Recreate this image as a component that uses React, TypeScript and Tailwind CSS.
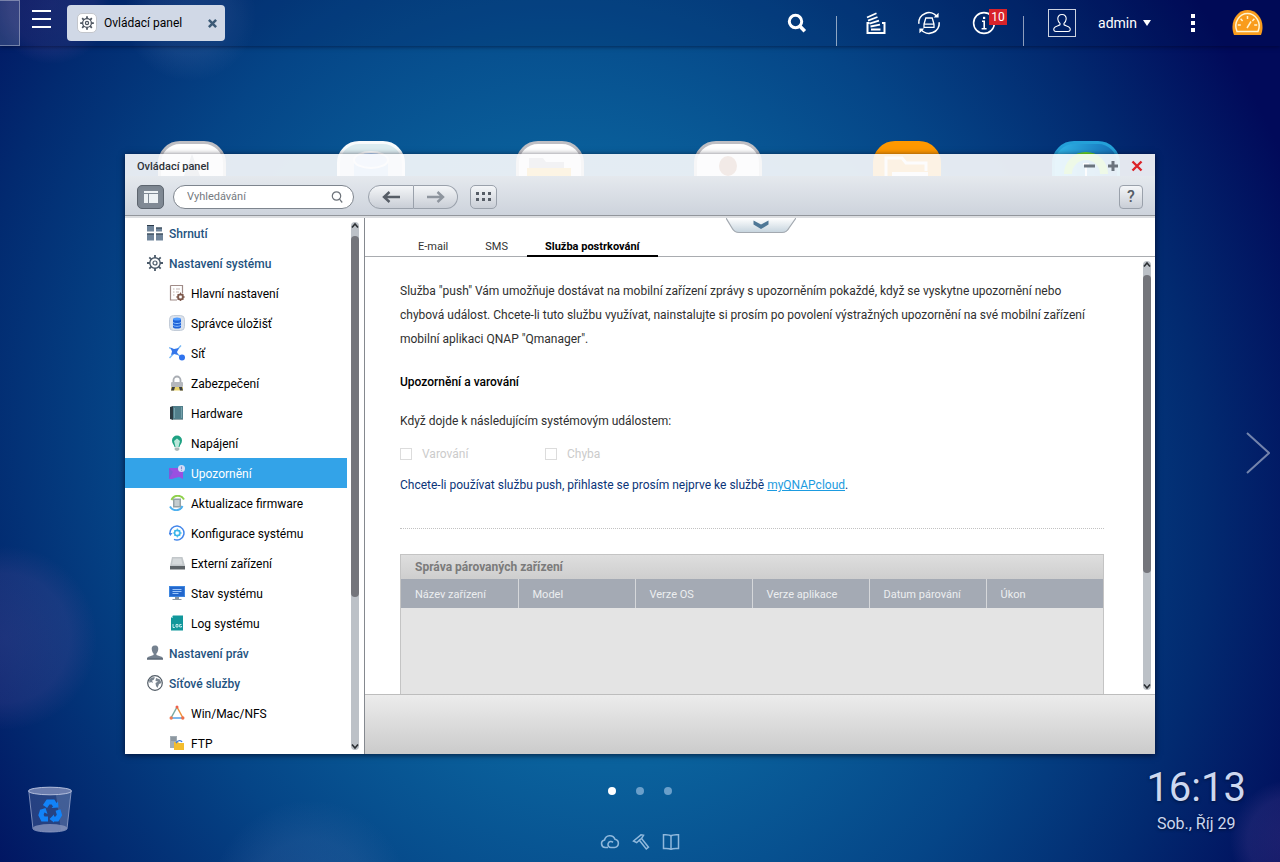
import React from "react";

type IconProps = { className?: string };

/* ---------- top bar icons ---------- */

const SearchIcon = ({ className }: IconProps) => (
  <svg viewBox="0 0 20 20" className={className} fill="none" stroke="currentColor">
    <circle cx="8.5" cy="8.5" r="6.2" strokeWidth="3" />
    <path d="M13 13.2 17.8 18.2" strokeWidth="3.6" />
  </svg>
);

const StackIcon = ({ className }: IconProps) => (
  <svg viewBox="0 0 20 22" className={className} fill="none" stroke="currentColor" strokeWidth="2">
    <path d="M3.5 11H1.5v10h17V11h-2.500" />
    <path d="M1 5.500 10.500 1.200M2 8.600 11.500 5M3.500 11.600 13 8.700M4.500 14.500 14 12.600M5 17.500h9.500" strokeWidth="1.800" />
  </svg>
);

const SyncIcon = ({ className }: IconProps) => (
  <svg viewBox="0 0 24 24" className={className} fill="none" stroke="currentColor" strokeWidth="1.600">
    <path d="M1.800 12.800A10.200 10.200 0 0 1 20 5.600M22.200 11.200A10.200 10.200 0 0 1 4 18.400" />
    <path d="M16.600 6.400h5V1.800zM7.400 17.600h-5v4.600z" fill="currentColor" stroke="none" />
    <path d="M8.800 7h6.400l1.800 6.200v3.200H7v-3.200zM7 13.200h10" strokeWidth="1.300" />
  </svg>
);

const InfoIcon = ({ className }: IconProps) => (
  <svg viewBox="0 0 24 24" className={className} fill="none" stroke="currentColor">
    <circle cx="12" cy="12" r="10.400" strokeWidth="1.600" />
    <path d="M10 10.200h2.200v7.400M9.600 17.800h5" strokeWidth="1.600" />
    <rect x="11" y="5.800" width="2.200" height="2.200" fill="currentColor" stroke="none" />
  </svg>
);

const UserIcon = ({ className }: IconProps) => (
  <svg viewBox="0 0 20 20" className={className} fill="none" stroke="currentColor" strokeWidth="1.100">
    <path d="M10 1.500c-3 0-4.300 2-4.200 4.400.1 2 1 3.300 2.200 4.400v1.500c-1.300 1-5 1.200-6 3.400-.8 2 .4 3.300 2 3.300h12c1.600 0 2.800-1.300 2-3.300-1-2.200-4.700-2.400-6-3.400v-1.500c1.200-1.100 2.100-2.400 2.200-4.400C14.300 3.500 13 1.500 10 1.500z" />
  </svg>
);

const GaugeIcon = ({ className }: IconProps) => (
  <svg viewBox="0 0 31 26" className={className}>
    <path d="M2 25C-3 12 5 0 15.500 0S34 12 29 25z" fill="#f99c1c" />
    <path d="M5 21.500C1 12 8 3.500 15.500 3.500S30 12 26 21.500z" fill="none" stroke="#fff3d0" strokeWidth="1.500" />
    <path d="M15.500 6v3M8.600 8.700l2 2.200M22.400 8.700l-2 2.200M5.800 15h3M25.200 15h-3M15 18l4-6.500" stroke="#fff3d0" strokeWidth="1.500" />
  </svg>
);

const Cog = ({ className }: IconProps) => (
  <svg viewBox="0 0 16 16" className={className} fill="none" stroke="currentColor">
    <circle cx="8" cy="8" r="5" strokeWidth="1.500" />
    <circle cx="8" cy="8" r="1.800" strokeWidth="1.400" />
    <path
      d="M8 .2v2.600M8 13.200v2.600M.2 8h2.600M13.200 8h2.600M2.500 2.500l1.800 1.800M11.700 11.700l1.800 1.800M2.500 13.500l1.800-1.800M11.700 4.300l1.800-1.800"
      strokeWidth="2"
    />
  </svg>
);

/* ---------- sidebar icons ---------- */

const icons: Record<string, React.ReactNode> = {
  overview: (
    <>
      <path d="M0 0h7v6.500H0zM9 2.500h6v4H9zM0 8.500h7v7H0zM9 8.500h7v7H9z" fill="#70859b" />
      <path d="M0 0h7v1H0zM9 2.500h6v1H9zM0 8.500h7v1H0zM9 8.500h7v1H9z" fill="#2b3a49" />
    </>
  ),
  cog: (
    <g fill="none" stroke="#4b5a69">
      <circle cx="8" cy="8" r="5.200" strokeWidth="1.400" />
      <circle cx="8" cy="8" r="2" strokeWidth="1.200" />
      <path d="M8 0v3M8 13v3M0 8h3M13 8h3M2.300 2.300l2 2M11.700 11.700l2 2M2.300 13.700l2-2M11.700 4.300l2-2" strokeWidth="1.800" />
    </g>
  ),
  general: (
    <>
      <path d="M1.500.5h12v8M1.500.5v14.500H8" fill="none" stroke="#a08c88" strokeWidth="1.200" />
      <path d="M4 4h1.500M7 4h4M4 7h1.500M7 7h3M4 10h1.500" stroke="#c3b5b0" />
      <circle cx="11.500" cy="12" r="2.600" fill="none" stroke="#7a5548" strokeWidth="1.600" />
      <path d="M11.500 7.500v9M7 12h9M8.500 9l6 6M8.500 15l6-6" stroke="#7a5548" strokeWidth=".9" />
      <circle cx="11.500" cy="12" r="1.400" fill="#fff" />
    </>
  ),
  storage: (
    <>
      <rect x=".5" y=".5" width="15" height="15" rx="4" fill="#dbe2ec" stroke="#c3ccd8" />
      <path d="M4 4v8c0 2 8 2 8 0V4z" fill="#1f62d8" />
      <ellipse cx="8" cy="4" rx="4" ry="1.600" fill="#4e9bff" />
      <path d="M4 7c0 2 8 2 8 0M4 9.800c0 2 8 2 8 0" fill="none" stroke="#8fc1ff" />
    </>
  ),
  network: (
    <>
      <path d="M5 6 13 13M.5 13 12 .5M0 2.500 6 6" stroke="#76b7f5" strokeWidth="1.400" />
      <path d="M1.500 2.500 5 4l5-1-2 4 1 3-4-1-3 1 1-3.500z" fill="#3476ea" />
      <circle cx="13" cy="12.500" r="3" fill="#2f73ee" />
    </>
  ),
  lock: (
    <>
      <path d="M4.500 8V5a3.500 3.500 0 0 1 7 0v3" fill="none" stroke="#a9adb3" strokeWidth="1.800" />
      <rect x="2" y="7" width="12" height="5" rx="1" fill="#b4b7bc" />
      <path d="M2 12h12v3.500H2z" fill="#ead46a" />
      <path d="M3 12h3l-1 3.500H2zM10 12h3l1 3.500h-3z" fill="#3c3f42" />
    </>
  ),
  hardware: (
    <>
      <path d="M1 2 4 1v14l-3-1z" fill="#2d3b43" />
      <rect x="4" y="1" width="10" height="13" fill="#517f8b" />
      <path d="M5 3h1v10H5zM12 2h1v11h-1z" fill="#76a2ac" />
      <path d="M4 14h10v1H4z" fill="#93a5aa" />
    </>
  ),
  power: (
    <>
      <path d="M8 .5a5 5 0 0 1 5 5c0 3-2 4-2.500 6.500h-5C5 9.500 3 8.500 3 5.500a5 5 0 0 1 5-5z" fill="#1fa283" />
      <path d="M8 3.500 11 6l-1.500 6h-3L5 6z" fill="#b9e8da" />
      <path d="M5.700 12.500h4.600V15l-2.300 1-2.300-1z" fill="#a9b6b4" />
    </>
  ),
  notify: (
    <>
      <path d="M0 3h14v11l-4-2-4 1-3 1H0z" fill="#9a4fe0" />
      <path d="M0 3l4 4-4 7z" fill="#7c5ad8" />
      <circle cx="12.500" cy="3.500" r="3.500" fill="#d4dcf6" />
      <path d="M12.500 1.500v2.500M12.500 4.800v1" stroke="#7f8fd2" strokeWidth="1.100" />
    </>
  ),
  firmware: (
    <>
      <path d="M2.500 5C5-.5 12-.5 15 4.500" fill="none" stroke="#8ed04a" strokeWidth="2" />
      <path d="M13.500 11C11 16.500 4 16.500 1 11.500" fill="none" stroke="#4db0ef" strokeWidth="2" />
      <rect x="4" y="3.500" width="8" height="9" fill="#94a1a6" />
      <rect x="5.500" y="5" width="5" height="6" fill="#c4cdd0" />
    </>
  ),
  config: (
    <>
      <path d="M1 9A7 7 0 1 1 5 14.400" fill="none" stroke="#4386ea" strokeWidth="1.500" />
      <path d="M-.5 8h4L1.300 11z" fill="#4386ea" />
      <g fill="none" stroke="#35b3ea">
        <circle cx="8.300" cy="8" r="2.800" strokeWidth="1.300" />
        <path d="M8.300 3.500v9M3.800 8h9M5.200 4.900l6.200 6.200M5.200 11.100l6.200-6.200" strokeWidth=".9" />
      </g>
      <circle cx="8.300" cy="8" r="1.600" fill="#fff" />
    </>
  ),
  external: (
    <>
      <path d="M3 2h10.500L16 11H1z" fill="#c2c7ca" />
      <path d="M4.200 3.500h8l1.300 6H3z" fill="#d6dadc" />
      <path d="M1 11h15v3.500H1z" fill="#5c6266" />
    </>
  ),
  status: (
    <>
      <rect x="0" y="1" width="16" height="11" fill="#3d86e0" />
      <rect x="1" y="2" width="14" height="9" fill="#2367cc" />
      <path d="M3.500 4.500h9M3.500 6.500h9M3.500 8.500h6" stroke="#9bc6fb" />
      <path d="M6 12h4v2h2.500v1h-9v-1H6z" fill="#8b95a0" />
    </>
  ),
  log: (
    <>
      <path d="M4 .5h10v15H2V3z" fill="#11979b" />
      <path d="M4 .5V3H2z" fill="#7fd0d2" />
      <path d="M4 9v3.500h1.800M7 9.500h2v2.500H7zM12.500 9.500h-1.800v2.500h1.800v-1" stroke="#d7f3f3" fill="none" strokeWidth=".9" />
    </>
  ),
  user: (
    <>
      <path d="M8 .5c-2.800 0-3.600 2-3.200 4.200.3 2 1 3 1.800 3.800v1.500L.8 12c-.8.800-.8 2-.8 2.500h16c0-.500 0-1.700-.8-2.500L9.400 10V8.500c.800-.800 1.500-1.800 1.800-3.800C11.600 2.500 10.800.500 8 .5z" fill="#75818f" />
      <path d="M0 13.500h16v1H0z" fill="#4f5b68" />
    </>
  ),
  globe: (
    <>
      <circle cx="8" cy="8" r="7.300" fill="#fff" stroke="#525c66" strokeWidth="1.200" />
      <path d="M2 5c2-3 4-3 6-2.500L6.500 5 5 5.500 6 8 4 7 2.500 8zM9 3l4 1.500L14.500 8 12 9l-1.500 4L9 11l-.500-3L11 6.500 8.500 6z" fill="#7a8590" />
    </>
  ),
  triangle: (
    <>
      <path d="M8 2 14 13" stroke="#f0913c" strokeWidth="1.500" />
      <path d="M8 2 2 13" stroke="#79a9a0" strokeWidth="1.500" />
      <path d="M2 13h12" stroke="#52a1e6" strokeWidth="1.500" />
      <circle cx="8" cy="2" r="1.500" fill="#ee5f4b" />
      <circle cx="2.200" cy="13" r="1.700" fill="#ef7b52" />
      <circle cx="13.800" cy="13" r="1.700" fill="#ee6f4a" />
    </>
  ),
  ftp: (
    <>
      <path d="M1 1h7v12H1z" fill="#a3adb5" />
      <path d="M2 3h5M2 5h5" stroke="#77828b" />
      <path d="M5 7h4l1 1h5v7H5z" fill="#f3bd2f" />
      <path d="M7 8c2-3 5-3 6-1" fill="none" stroke="#3a7be0" strokeWidth="1.400" />
    </>
  ),
};

type Row = { icon: string; label: string; group?: boolean; active?: boolean };

const rows: Row[] = [
  { icon: "overview", label: "Shrnutí", group: true },
  { icon: "cog", label: "Nastavení systému", group: true },
  { icon: "general", label: "Hlavní nastavení" },
  { icon: "storage", label: "Správce úložišť" },
  { icon: "network", label: "Síť" },
  { icon: "lock", label: "Zabezpečení" },
  { icon: "hardware", label: "Hardware" },
  { icon: "power", label: "Napájení" },
  { icon: "notify", label: "Upozornění", active: true },
  { icon: "firmware", label: "Aktualizace firmware" },
  { icon: "config", label: "Konfigurace systému" },
  { icon: "external", label: "Externí zařízení" },
  { icon: "status", label: "Stav systému" },
  { icon: "log", label: "Log systému" },
  { icon: "user", label: "Nastavení práv", group: true },
  { icon: "globe", label: "Síťové služby", group: true },
  { icon: "triangle", label: "Win/Mac/NFS" },
  { icon: "ftp", label: "FTP" },
];

const rowClass = (row: Row) => {
  if (row.active) return "bg-[#33a3e8] pl-11 text-white";
  if (row.group) return "pl-[22px] font-medium text-[#1f5380]";
  return "pl-11 text-black";
};

function ScrollBar({ thumb }: { thumb: string }) {
  return (
    <div className="flex w-2 shrink-0 flex-col rounded-full bg-[#bcc1c7]">
      <svg viewBox="0 0 8 14" className="h-[14px] w-2 shrink-0" fill="none" stroke="#2b2f33" strokeWidth="1.600">
        <path d="M1 5.500 4 2 7 5.500" />
      </svg>
      <div className="min-h-0 flex-1">
        <div className={`w-2 rounded-full bg-[#74757b] ${thumb}`} />
      </div>
      <svg viewBox="0 0 8 12" className="h-3 w-2 shrink-0" fill="none" stroke="#2b2f33" strokeWidth="1.600">
        <path d="M1 6.500 4 10 7 6.500" />
      </svg>
    </div>
  );
}

/* ---------- desktop ---------- */

function Backdrop() {
  return (
    <svg className="absolute inset-0 h-full w-full" viewBox="0 0 1280 862" preserveAspectRatio="none" aria-hidden="true">
      <defs>
        <radialGradient id="glow" gradientUnits="userSpaceOnUse" cx="0" cy="0" r="1" gradientTransform="translate(590 470) rotate(-20) scale(760 860)">
          <stop offset="0" stopColor="#0c6fa9" />
          <stop offset=".35" stopColor="#0a619c" />
          <stop offset=".6" stopColor="#054587" />
          <stop offset=".8" stopColor="#022a70" />
          <stop offset="1" stopColor="#010a5a" />
        </radialGradient>
        <radialGradient id="bokeh">
          <stop offset="0" stopColor="#6a50a0" stopOpacity=".26" />
          <stop offset=".7" stopColor="#6a50a0" stopOpacity=".2" />
          <stop offset="1" stopColor="#6a50a0" stopOpacity="0" />
        </radialGradient>
        <radialGradient id="bokehBlue">
          <stop offset="0" stopColor="#6080c0" stopOpacity=".22" />
          <stop offset=".6" stopColor="#6080b8" stopOpacity=".16" />
          <stop offset="1" stopColor="#6080b8" stopOpacity="0" />
        </radialGradient>
      </defs>
      <rect width="1280" height="862" fill="url(#glow)" />
      <circle cx="5" cy="638" r="92" fill="url(#bokeh)" />
      <circle cx="310" cy="900" r="100" fill="url(#bokehBlue)" />
      <circle cx="52" cy="4" r="60" fill="url(#bokeh)" />
      <circle cx="190" cy="15" r="66" fill="url(#bokehBlue)" />
      <circle cx="1290" cy="840" r="60" fill="url(#bokeh)" />
    </svg>
  );
}

const appTiles: { label: string; box: string; art: React.ReactNode }[] = [
  { label: "Aplikace 1", box: "border-[#bfbfc4] bg-white", art: <path d="M31 10 42 40H20z" fill="#8a94a0" /> },
  {
    label: "Aplikace 2",
    box: "border-[#f8fbfc] bg-[#dcecf0]",
    art: (
      <>
        <path d="M14 16v24h34V16z" fill="#8fbcf0" />
        <ellipse cx="31" cy="16" rx="17" ry="8" fill="#b4d4fa" stroke="#fff" strokeWidth="2" />
      </>
    ),
  },
  {
    label: "Aplikace 3",
    box: "border-[#bfbfc4] bg-white",
    art: (
      <>
        <path d="M10 14h14l3 4h18v20H10z" fill="#9a9da2" />
        <path d="M8 24h44v20H8z" fill="#ffb000" />
      </>
    ),
  },
  {
    label: "Aplikace 4",
    box: "border-[#bfbfc4] bg-white",
    art: <ellipse cx="31" cy="22" rx="9" ry="10" fill="#9c4a20" />,
  },
  {
    label: "Aplikace 5",
    box: "border-[#ff9800] bg-[#ff9800]",
    art: (
      <>
        <path d="M10 38V14h16l4 5h20v8" fill="none" stroke="#fff" strokeWidth="3" />
        <path d="M16 28h36v14H16z" fill="#fff" />
      </>
    ),
  },
  {
    label: "Aplikace 6",
    box: "border-[#24a0d8] bg-linear-to-r from-[#32b7e8] to-[#1670b8]",
    art: (
      <>
        <path d="M13 30a18 18 0 0 1 36 0" fill="none" stroke="#6fe01f" strokeWidth="8" />
        <path d="M31 20v16M28 20h6" stroke="#fff" strokeWidth="2" />
      </>
    ),
  },
];

function TopBar() {
  return (
    <header className="relative z-10 flex h-[46px] shrink-0 items-center bg-[#001040]/15 pr-[17px] text-white shadow-[0_1px_4px_rgba(0,0,30,0.5)]">
      <div className="h-full w-5 border border-l-0 border-white/35 bg-white/15" />
      <button aria-label="Hlavní nabídka" className="mb-2 ml-3 flex w-[19px] flex-col gap-[6px]">
        <span className="h-[2px] bg-white" />
        <span className="h-[2px] bg-white" />
        <span className="h-[2px] bg-white" />
      </button>
      <div className="ml-4 flex h-9 w-[158px] items-center rounded bg-[#d0d8e6] pr-2 pl-[10px] text-black">
        <span className="flex size-5 items-center justify-center rounded-[5px] border border-[#c3c6cc] bg-white text-[#4d5560]">
          <Cog className="size-[14px]" />
        </span>
        <span className="ml-[7px] flex-1 text-xs">Ovládací panel</span>
        <button aria-label="Zavřít kartu" className="text-[#3c5a76]">
          <svg viewBox="0 0 10 10" className="size-[9px]" stroke="currentColor" strokeWidth="2.800">
            <path d="M1 1l8 8M9 1 1 9" />
          </svg>
        </button>
      </div>

      <div className="ml-auto flex h-full items-center">
        <button aria-label="Hledat" className="mr-[29px]">
          <SearchIcon className="size-5" />
        </button>
        <span className="mr-[29px] h-[30px] w-px self-end bg-white/55" />
        <button aria-label="Úlohy na pozadí" className="mr-[31px]">
          <StackIcon className="h-[22px] w-5" />
        </button>
        <button aria-label="Externí zařízení" className="mr-[31px]">
          <SyncIcon className="size-6" />
        </button>
        <button aria-label="Oznámení" className="relative mr-[27px]">
          <InfoIcon className="size-6" />
          <span className="absolute -top-[2px] left-[17px] flex h-4 w-[18px] items-center justify-center bg-[#d8232a] text-xs leading-none">
            10
          </span>
        </button>
        <span className="mr-6 h-[30px] w-px self-end bg-white/55" />
        <button className="mr-10 flex items-center">
          <span className="mr-[22px] flex size-7 items-center justify-center border border-white/80">
            <UserIcon className="size-5" />
          </span>
          <span className="text-sm">admin</span>
          <svg viewBox="0 0 8 6" className="ml-[6px] h-[6px] w-2" fill="currentColor">
            <path d="M0 0h8L4 6z" />
          </svg>
        </button>
        <button aria-label="Více" className="mr-[37px] flex flex-col gap-[3px]">
          <span className="size-1 bg-white" />
          <span className="size-1 bg-white" />
          <span className="size-1 bg-white" />
        </button>
        <button aria-label="Řídicí panel">
          <GaugeIcon className="h-[26px] w-[31px]" />
        </button>
      </div>
    </header>
  );
}

const toolButton = "flex h-6 items-center justify-center border border-[#9aa1ab] bg-linear-to-b from-[#f4f6f8] to-[#c9ced6] text-[#565d66]";

function ControlPanel() {
  return (
    <section
      aria-label="Ovládací panel"
      className="absolute inset-x-[125px] inset-y-[108px] flex flex-col text-xs shadow-[0_1px_6px_rgba(0,0,20,0.7)]"
    >
      <div className="flex h-[22px] shrink-0 items-center bg-[#fcfcfd]/90 px-3 text-[#2d3339]">
        <h1 className="flex-1 pt-1 text-[11px] font-medium">Ovládací panel</h1>
        <div className="flex items-center gap-3 pt-[2px] text-[#6b747e]">
          <button aria-label="Minimalizovat">
            <svg viewBox="0 0 12 12" className="size-3" stroke="currentColor" strokeWidth="3">
              <path d="M1 6h11" />
            </svg>
          </button>
          <button aria-label="Maximalizovat">
            <svg viewBox="0 0 12 12" className="size-3" stroke="currentColor" strokeWidth="3">
              <path d="M1 6h10M6 1v10" />
            </svg>
          </button>
          <button aria-label="Zavřít" className="text-[#dc2228]">
            <svg viewBox="0 0 12 12" className="size-3" stroke="currentColor" strokeWidth="2.400">
              <path d="M1.500 1.500l9 9M10.500 1.500l-9 9" />
            </svg>
          </button>
        </div>
      </div>

      <div className="flex h-10 shrink-0 items-center border-b border-[#92969c] bg-linear-to-b from-[#e5e9ee] to-[#cdd3dc] px-3 pt-[2px]">
        <button aria-label="Postranní panel" className="flex h-6 w-[27px] items-center justify-center rounded-[5px] border border-[#5d656f] bg-[#818a95] shadow-inner">
          <svg viewBox="0 0 14 12" className="h-3 w-[14px]" fill="#eef2f5">
            <path d="M0 0h14v2H0zM0 3h4v9H0zM5 3h9v9H5z" />
          </svg>
        </button>
        <label className="ml-[9px] flex h-6 w-[181px] items-center rounded-full border border-[#7e858e] bg-white px-[13px]">
          <input aria-label="Vyhledávání" placeholder="Vyhledávání" className="min-w-0 flex-1 bg-transparent pt-[2px] text-[11px] outline-none placeholder:text-[#757a80]" />
          <svg viewBox="0 0 12 12" className="-mr-[3px] size-3" fill="none" stroke="#6d737a" strokeWidth="1.200">
            <circle cx="5.500" cy="5" r="4.200" />
            <path d="M8.500 8.200 11.200 11.500" />
          </svg>
        </label>
        <div className="ml-[14px] flex">
          <button aria-label="Zpět" className={`${toolButton} w-[46px] rounded-l-full`}>
            <svg viewBox="0 0 18 12" className="h-3 w-[18px]" fill="none" stroke="currentColor" strokeWidth="2.400">
              <path d="M18 6H2M7.500 1 2 6l5.500 5" />
            </svg>
          </button>
          <button aria-label="Vpřed" className={`${toolButton} w-11 rounded-r-full border-l-0`}>
            <svg viewBox="0 0 18 12" className="h-3 w-[18px]" fill="none" stroke="#8e959e" strokeWidth="2.400">
              <path d="M0 6h16M10.500 1 16 6l-5.500 5" />
            </svg>
          </button>
        </div>
        <button aria-label="Zobrazit jako ikony" className={`${toolButton} ml-3 w-[27px] rounded-[5px]`}>
          <svg viewBox="0 0 15 10" className="h-[10px] w-[15px]" fill="currentColor">
            <path d="M0 0h3v3H0zM6 0h3v3H6zM12 0h3v3h-3zM0 6h3v3H0zM6 6h3v3H6zM12 6h3v3h-3z" />
          </svg>
        </button>
        <button aria-label="Nápověda" className={`${toolButton} ml-auto w-6 rounded text-base font-medium`}>
          ?
        </button>
      </div>
      <div className="h-[2px] shrink-0 bg-[#dcdee1]" />

      <div className="flex min-h-0 flex-1 bg-white">
        <nav className="flex w-[240px] shrink-0 border-r border-[#85898f]">
          <ul className="min-w-0 flex-1 overflow-hidden">
            {rows.map((row) => (
              <li key={row.label}>
                <a href="#" className={`flex h-[30px] items-center gap-[6px] ${rowClass(row)}`}>
                  <svg viewBox="0 0 16 16" className="size-4 shrink-0">
                    {icons[row.icon]}
                  </svg>
                  <span className="pt-px">{row.label}</span>
                </a>
              </li>
            ))}
          </ul>
          <div className="flex py-1 pr-[5px] pl-1">
            <ScrollBar thumb="h-[72%]" />
          </div>
        </nav>

        <div className="relative flex min-w-0 flex-1 flex-col">
          <button aria-label="Rozbalit" className="absolute top-0 left-1/2 -ml-[34px]">
            <svg viewBox="0 0 70 16" className="h-4 w-[70px]">
              <defs>
                <linearGradient id="pull" x2="0" y2="1">
                  <stop offset="0" stopColor="#fff" />
                  <stop offset="1" stopColor="#c6d4de" />
                </linearGradient>
              </defs>
              <path d="M0 0 6 10c2 4 4 4.500 7 4.500h43c3 0 5-.5 7-4.500l7-10" fill="url(#pull)" stroke="#a3a9b0" strokeWidth="1.200" />
              <path d="M27.500 2.500 35 6.500l7.500-4v4L35 11l-7.500-4.500z" fill="#4e7796" />
            </svg>
          </button>

          <div role="tablist" className="flex h-[39px] shrink-0 items-end gap-px border-b border-[#a9acb0] pl-[35px] text-[11px] text-[#333]">
            <button role="tab" className="h-[26px] px-[18px] pt-[9px]">E-mail</button>
            <button role="tab" className="h-[26px] px-[18px] pt-[9px]">SMS</button>
            <button role="tab" aria-selected="true" className="-mb-px h-[27px] border-b-2 border-black px-[18px] pt-[9px] font-bold text-black">
              Služba postrkování
            </button>
          </div>

          <div className="flex min-h-0 flex-1 overflow-hidden">
            <div className="min-w-0 flex-1 overflow-hidden pt-[22px] pr-[39px] pl-[35px] text-[#2f2f2f]">
              <p className="leading-6">
                Služba "push" Vám umožňuje dostávat na mobilní zařízení zprávy s upozorněním pokaždé, když se vyskytne upozornění nebo
                chybová událost. Chcete-li tuto službu využívat, nainstalujte si prosím po povolení výstražných upozornění na své mobilní zařízení
                mobilní aplikaci QNAP "Qmanager".
              </p>
              <h2 className="mt-[19px] leading-6 font-medium text-black">Upozornění a varování</h2>
              <p className="mt-[15px] leading-6">Když dojde k následujícím systémovým událostem:</p>
              <div className="mt-[9px] flex h-6 items-center text-[#cbcbcb]">
                <label className="flex w-[145px] items-center gap-[10px]">
                  <input type="checkbox" disabled className="size-3 appearance-none border border-[#dcdcdc] bg-white" />
                  Varování
                </label>
                <label className="flex items-center gap-[10px]">
                  <input type="checkbox" disabled className="size-3 appearance-none border border-[#dcdcdc] bg-white" />
                  Chyba
                </label>
              </div>
              <p className="mt-[7px] leading-6 text-[#0a3478]">
                Chcete-li používat službu push, přihlaste se prosím nejprve ke službě{" "}
                <a href="#" className="text-[#1b9be0] underline">myQNAPcloud</a>.
              </p>
              <hr className="mt-[31px] border-t border-dotted border-[#c2c2c2]" />

              <div className="mt-[25px] border border-[#c4c4c4] bg-[#e4e4e4] text-[11px]">
                <h3 className="flex h-6 items-center bg-linear-to-b from-[#dedede] to-[#cecece] px-[14px] text-xs font-bold text-[#7b7b7b]">
                  Správa párovaných zařízení
                </h3>
                <table className="w-full table-fixed text-left">
                  <thead>
                    <tr className="h-[29px] bg-[#a4aab4] text-[#eceef0]">
                      {["Název zařízení", "Model", "Verze OS", "Verze aplikace", "Datum párování", "Úkon"].map((name) => (
                        <th key={name} className="border-r border-[#d5d7da] pt-1 pl-[14px] font-normal last:border-r-0">
                          {name}
                        </th>
                      ))}
                    </tr>
                  </thead>
                  <tbody>
                    <tr className="h-[150px]">
                      <td colSpan={6} />
                    </tr>
                  </tbody>
                </table>
              </div>
            </div>
            <div className="flex py-1 pr-1">
              <ScrollBar thumb="h-[74%]" />
            </div>
          </div>

          <footer className="h-[60px] shrink-0 border-t border-[#bdbdbd] bg-linear-to-b from-[#ececec] to-[#cbcbcb]" />
        </div>
      </div>
    </section>
  );
}

export default function App() {
  return (
    <div className="relative flex h-screen min-h-[640px] flex-col overflow-hidden bg-[#03256d] font-['Roboto',sans-serif]">
      <Backdrop />
      <TopBar />

      <main className="relative flex min-h-0 flex-1 flex-col">
        <div className="flex justify-between pt-[95px] pr-40 pl-[158px]">
          {appTiles.map((tile) => (
            <button key={tile.label} aria-label={tile.label} className={`size-[68px] overflow-hidden rounded-[22px] border-3 ${tile.box}`}>
              <svg viewBox="0 0 62 62" className="size-full">{tile.art}</svg>
            </button>
          ))}
        </div>

        <div className="mt-auto grid h-[108px] grid-cols-3 text-white">
          <button aria-label="Koš" className="mt-8 ml-7 h-[48px] w-11">
            <svg viewBox="0 0 44 48" className="h-[48px] w-11">
              <path d="M.8 5 5 43c3 4 31 4 34 0l4.200-38z" fill="#8593bd" fillOpacity=".28" stroke="#97a5cc" strokeWidth=".8" />
              <path d="M28 9 43 5l-4 38-6 2z" fill="#b6c2df" fillOpacity=".2" />
              <ellipse cx="22" cy="5" rx="21.500" ry="3.800" fill="#6b7dae" stroke="#b3bedc" />
              <ellipse cx="22" cy="42" rx="17" ry="4" fill="#8d9ac0" fillOpacity=".75" />
              <g fill="none" stroke="#1283f8" strokeWidth="5">
                <path d="M17 20.500 20 16h5l2.500 4" />
                <path d="M30 24 31.500 29l-2.500 4h-4" />
                <path d="M20 33h-5L13 29l1.500-4.500" />
              </g>
              <path d="M23.500 22 30.500 21.500 30 15.500zM26 28.500v8L21.500 33zM11.500 24l6-2 2 6z" fill="#1283f8" />
            </svg>
          </button>

          <div className="flex flex-col items-center">
            <div className="mt-[33px] flex gap-5">
              <span className="size-2 rounded-full bg-white" />
              <span className="size-2 rounded-full bg-[#6a9fca]" />
              <span className="size-2 rounded-full bg-[#6a9fca]" />
            </div>
            <div className="mt-[38px] flex items-center gap-3 text-[#8fb8dc]">
              <a href="#" aria-label="myQNAPcloud">
                <svg viewBox="0 0 20 18" className="h-[18px] w-5" fill="none" stroke="currentColor" strokeWidth="1.600">
                  <path d="M8 14.500H5.500A3.800 3.800 0 0 1 4.500 7 5.500 5.500 0 0 1 15 6.200a4.200 4.200 0 0 1-.5 8.300H11a3 3 0 1 1 2-5.200" />
                </svg>
              </a>
              <a href="#" aria-label="Nástroje">
                <svg viewBox="0 0 18 18" className="size-[18px]" fill="none" stroke="currentColor" strokeWidth="1.500">
                  <path d="M1.500 8 9 1.800l2.500.500L9.500 5.500l7 8.700-2.200 1.800-7-8.800-2.600 2.500zM7.200 7.200 9.500 5.500" />
                </svg>
              </a>
              <a href="#" aria-label="Nápověda online">
                <svg viewBox="0 0 18 18" className="size-[18px]" fill="none" stroke="currentColor" strokeWidth="1.500">
                  <path d="M9 3C8 1.800 6 1.500 1.500 1.800v13.700C6 15.200 8 15.500 9 16.500M9 3c1-1.200 3-1.500 7.500-1.200v13.700C12 15.200 10 15.500 9 16.500M9 3v13.500" />
                </svg>
              </a>
            </div>
          </div>

          <div className="mr-[34px] flex flex-col items-center justify-self-end pt-[10px] text-[#cdd8f0] [text-shadow:0_1px_3px_rgba(0,0,0,0.5)]">
            <time className="text-[40px] leading-[48px]">16:13</time>
            <span className="text-base">Sob., Říj 29</span>
          </div>
        </div>

        <button aria-label="Další plocha" className="absolute top-1/2 right-[10px] -mt-[22px] text-white/45">
          <svg viewBox="0 0 24 42" className="h-[42px] w-6" fill="none" stroke="currentColor" strokeWidth="2">
            <path d="M1 1l22 20L1 41" />
          </svg>
        </button>

        <ControlPanel />
      </main>
    </div>
  );
}
